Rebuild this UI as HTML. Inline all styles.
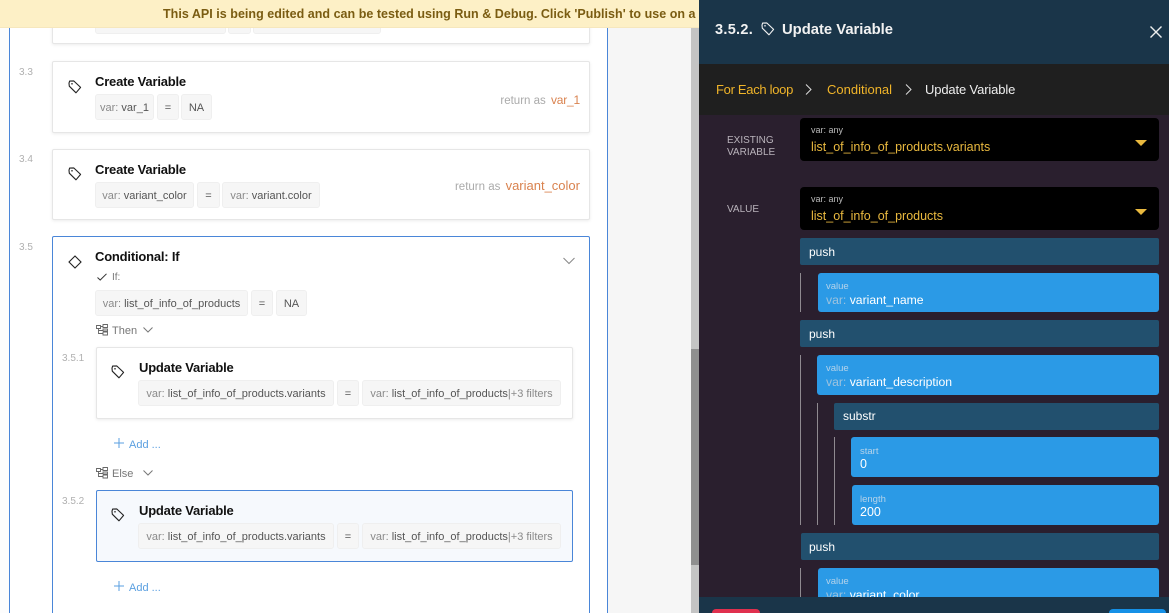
<!DOCTYPE html>
<html><head><meta charset="utf-8">
<style>
html,body{margin:0;padding:0;width:1169px;height:613px;overflow:hidden;background:#f6f6f6;font-family:"Liberation Sans",sans-serif}
#w{position:relative;width:1169px;height:613px;overflow:hidden;contain:paint}
.a,.t,.card,.p{position:absolute;box-sizing:border-box}
.t{white-space:nowrap;line-height:16px;height:16px}
.card{background:#fff;border:1px solid #e6e6e6;border-radius:2px;box-shadow:0 1px 3px rgba(0,0,0,.08)}
.blue{border:1px solid #4a86d8}
.p{background:#f6f6f6;border:1px solid #efefef;border-radius:3px;height:26px;line-height:26px;font-size:11px;color:#555;white-space:nowrap;text-align:center}
.p i{font-style:normal;color:#8a8a8a}
.n{font-size:10px;color:#b0b0b0}
.ti{font-size:13px;font-weight:bold;color:#111;letter-spacing:-.2px}
.ret{font-size:11.5px;color:#aaa;text-align:right}
.ret span{margin-right:2px}
.ret b{font-weight:normal;font-size:13px;color:#d9824e}
.g{font-size:11px;color:#777}
.add{font-size:11px;color:#5a9fe0}
.b1{background:#22506e;border-radius:2px}
.b2{background:#2b9ae6;border-radius:3px}
.sm{font-size:9.5px;color:#b5d3ea}
.v{font-size:12.2px;color:#fff}
.v i{font-style:normal;color:#9ec3de}
.pu{font-size:12px;color:#fff}
.ln{width:1px;background:#8f8a90}
svg{position:absolute;overflow:visible}
</style></head><body><div id="w">

<div class="a" style="left:0;top:0;width:9px;height:613px;background:#fdfdfd"></div>
<div class="a" style="left:9px;top:0;width:599px;height:613px;background:#fff;border-left:1px solid #4a86d8;border-right:1px solid #4a86d8"></div>
<div class="a" style="left:691px;top:0;width:8px;height:613px;background:#c4c4c4"></div>
<div class="a" style="left:691px;top:349px;width:8px;height:216px;background:#8f8f8f"></div>

<!-- 3.2 -->
<div class="card" style="left:52px;top:-20px;width:538px;height:64px"></div>
<div class="p" style="left:95px;top:8px;width:131px"></div>
<div class="p" style="left:228px;top:8px;width:23px"></div>
<div class="p" style="left:253px;top:8px;width:128px"></div>

<!-- 3.3 -->
<div class="t n" style="left:19px;top:65px">3.3</div>
<div class="card" style="left:52px;top:61px;width:538px;height:72px"></div>
<svg style="left:68px;top:80px" width="14" height="14" viewBox="0 0 14 14" fill="none" stroke="#222" stroke-width="1.1" stroke-linejoin="round"><path d="M1 3.2 1.6 1.1 5.7 .9 12.6 7.4 8 12.8 1.3 6.2Z"/><circle cx="4" cy="3.8" r=".8" fill="#222" stroke="none"/></svg>
<div class="t ti" style="left:95px;top:74px">Create Variable</div>
<div class="p" style="left:95px;top:94px;width:59px"><i>var:</i> var_1</div>
<div class="p" style="left:157px;top:94px;width:22px">=</div>
<div class="p" style="left:181px;top:94px;width:31px">NA</div>
<div class="t ret" style="right:589px;top:92px"><span>return as</span> <b style="font-size:12px;letter-spacing:-.2px">var_1</b></div>

<!-- 3.4 -->
<div class="t n" style="left:19px;top:152px">3.4</div>
<div class="card" style="left:52px;top:149px;width:538px;height:71px"></div>
<svg style="left:68px;top:167px" width="14" height="14" viewBox="0 0 14 14" fill="none" stroke="#222" stroke-width="1.1" stroke-linejoin="round"><path d="M1 3.2 1.6 1.1 5.7 .9 12.6 7.4 8 12.8 1.3 6.2Z"/><circle cx="4" cy="3.8" r=".8" fill="#222" stroke="none"/></svg>
<div class="t ti" style="left:95px;top:162px">Create Variable</div>
<div class="p" style="left:95px;top:182px;width:99px"><i>var:</i> variant_color</div>
<div class="p" style="left:197px;top:182px;width:23px">=</div>
<div class="p" style="left:222px;top:182px;width:98px"><i>var:</i> variant.color</div>
<div class="t ret" style="right:589px;top:178px"><span>return as</span> <b>variant_color</b></div>

<!-- 3.5 -->
<div class="t n" style="left:19px;top:240px">3.5</div>
<div class="card blue" style="left:52px;top:236px;width:538px;height:400px;box-shadow:none"></div>
<svg style="left:68px;top:255px" width="14" height="14" viewBox="0 0 14 14" fill="none" stroke="#222" stroke-width="1.1"><path d="M7 1 13 7 7 13 1 7Z"/></svg>
<div class="t ti" style="left:95px;top:249px">Conditional: If</div>
<svg style="left:563px;top:257px" width="12" height="8" viewBox="0 0 12 8" fill="none" stroke="#888" stroke-width="1"><path d="M.5 1 6 6.5 11.5 1"/></svg>
<svg style="left:97px;top:273px" width="10" height="8" viewBox="0 0 10 8" fill="none" stroke="#333" stroke-width="1"><path d="M.5 4.5 3.2 7 9.5 .8"/></svg>
<div class="t g" style="left:112px;top:270px;font-size:10px">If:</div>
<div class="p" style="left:95px;top:290px;width:153px"><i>var:</i> list_of_info_of_products</div>
<div class="p" style="left:251px;top:290px;width:22px">=</div>
<div class="p" style="left:276px;top:290px;width:31px">NA</div>

<svg style="left:96px;top:324px" width="12" height="12" viewBox="0 0 12 12" fill="none" stroke="#666" stroke-width=".9"><path d="M.5 1.5H4.5V4.5H.5ZM7 .5H11.5V3.5H7ZM7 8H11.5V11H7ZM2.5 4.5V9.5H7M4.5 2.5H7M2.5 6.5H7V5H11.5V7H7"/></svg>
<div class="t g" style="left:112px;top:323px">Then</div>
<svg style="left:143px;top:327px" width="10" height="6" viewBox="0 0 10 6" fill="none" stroke="#777" stroke-width="1"><path d="M.5 .5 5 5 9.5 .5"/></svg>

<!-- 3.5.1 -->
<div class="t n" style="left:62px;top:351px">3.5.1</div>
<div class="card" style="left:96px;top:347px;width:477px;height:72px"></div>
<svg style="left:111px;top:365px" width="14" height="14" viewBox="0 0 14 14" fill="none" stroke="#222" stroke-width="1.1" stroke-linejoin="round"><path d="M1 3.2 1.6 1.1 5.7 .9 12.6 7.4 8 12.8 1.3 6.2Z"/><circle cx="4" cy="3.8" r=".8" fill="#222" stroke="none"/></svg>
<div class="t ti" style="left:139px;top:360px">Update Variable</div>
<div class="p" style="left:138px;top:380px;width:196px"><i>var:</i> list_of_info_of_products.variants</div>
<div class="p" style="left:337px;top:380px;width:22px">=</div>
<div class="p" style="left:362px;top:380px;width:199px"><i>var:</i> list_of_info_of_products<i>|+3 filters</i></div>

<svg style="left:114px;top:438px" width="10" height="10" viewBox="0 0 10 10" stroke="#5a9fe0" stroke-width="1"><path d="M5 0V10M0 5H10"/></svg>
<div class="t add" style="left:129px;top:437px">Add ...</div>

<svg style="left:96px;top:467px" width="12" height="12" viewBox="0 0 12 12" fill="none" stroke="#666" stroke-width=".9"><path d="M.5 1.5H4.5V4.5H.5ZM7 .5H11.5V3.5H7ZM7 8H11.5V11H7ZM2.5 4.5V9.5H7M4.5 2.5H7M2.5 6.5H7V5H11.5V7H7"/></svg>
<div class="t g" style="left:112px;top:466px">Else</div>
<svg style="left:143px;top:470px" width="10" height="6" viewBox="0 0 10 6" fill="none" stroke="#777" stroke-width="1"><path d="M.5 .5 5 5 9.5 .5"/></svg>

<!-- 3.5.2 -->
<div class="t n" style="left:62px;top:494px">3.5.2</div>
<div class="card blue" style="left:96px;top:490px;width:477px;height:72px;background:#f6f9fd;box-shadow:none"></div>
<svg style="left:111px;top:508px" width="14" height="14" viewBox="0 0 14 14" fill="none" stroke="#222" stroke-width="1.1" stroke-linejoin="round"><path d="M1 3.2 1.6 1.1 5.7 .9 12.6 7.4 8 12.8 1.3 6.2Z"/><circle cx="4" cy="3.8" r=".8" fill="#222" stroke="none"/></svg>
<div class="t ti" style="left:139px;top:503px">Update Variable</div>
<div class="p" style="left:138px;top:523px;width:196px"><i>var:</i> list_of_info_of_products.variants</div>
<div class="p" style="left:337px;top:523px;width:22px">=</div>
<div class="p" style="left:362px;top:523px;width:199px"><i>var:</i> list_of_info_of_products<i>|+3 filters</i></div>

<svg style="left:114px;top:581px" width="10" height="10" viewBox="0 0 10 10" stroke="#5a9fe0" stroke-width="1"><path d="M5 0V10M0 5H10"/></svg>
<div class="t add" style="left:129px;top:580px">Add ...</div>

<!-- Banner -->
<div class="a" style="left:0;top:0;width:699px;height:28px;background:#fdf0c6;border-bottom:1px solid #f6e7bd"></div>
<div class="t" style="left:163px;top:6px;font-size:12.5px;font-weight:bold;color:#7a5c12;letter-spacing:.03px">This API is being edited and can be tested using Run &amp; Debug. Click 'Publish' to use on a</div>

<!-- Right panel -->
<div class="a" style="left:699px;top:0;width:470px;height:613px;background:#2a1f2e"></div>
<div class="a" style="left:699px;top:0;width:470px;height:64px;background:#1a3549"></div>
<div class="a" style="left:699px;top:64px;width:470px;height:51px;background:#1f1f1f"></div>

<div class="t" style="left:715px;top:22px;font-size:14.5px;font-weight:bold;color:#f2f2f2;letter-spacing:.3px">3.5.2.</div>
<svg style="left:761px;top:22px" width="14" height="14" viewBox="0 0 14 14" fill="none" stroke="#f2f2f2" stroke-width="1.1" stroke-linejoin="round"><path d="M1 3.2 1.6 1.1 5.7 .9 12.6 7.4 8 12.8 1.3 6.2Z"/><circle cx="4" cy="3.8" r=".8" fill="#f2f2f2" stroke="none"/></svg>
<div class="t" style="left:782px;top:22px;font-size:14.8px;font-weight:bold;color:#f2f2f2">Update Variable</div>
<svg style="left:1150px;top:26px" width="12" height="12" viewBox="0 0 12 12" stroke="#eee" stroke-width="1.4"><path d="M.5 .5 11.5 11.5M11.5 .5 .5 11.5"/></svg>

<div class="t" style="left:716px;top:82px;font-size:13px;color:#f0b429;letter-spacing:-.3px">For Each loop</div>
<svg style="left:805px;top:84px" width="7" height="11" viewBox="0 0 7 11" fill="none" stroke="#ddd" stroke-width="1"><path d="M1 .5 6 5.5 1 10.5"/></svg>
<div class="t" style="left:827px;top:82px;font-size:13px;color:#f0b429">Conditional</div>
<svg style="left:905px;top:84px" width="7" height="11" viewBox="0 0 7 11" fill="none" stroke="#ddd" stroke-width="1"><path d="M1 .5 6 5.5 1 10.5"/></svg>
<div class="t" style="left:925px;top:82px;font-size:13px;color:#eee;letter-spacing:-.14px">Update Variable</div>

<div class="t" style="left:727px;top:135px;font-size:10px;line-height:12px;height:24px;color:#b9b3bb">EXISTING<br>VARIABLE</div>
<div class="t" style="left:727px;top:202px;font-size:10px;color:#b9b3bb">VALUE</div>

<div class="a" style="left:800px;top:118px;width:359px;height:43px;background:#000;border-radius:4px"></div>
<div class="t" style="left:811px;top:122px;font-size:9px;color:#bbb">var: any</div>
<div class="t" style="left:811px;top:139px;font-size:12.5px;color:#e9b93f">list_of_info_of_products.variants</div>
<svg style="left:1135px;top:140px" width="12" height="6"><path d="M0 0H12L6 6Z" fill="#e9b93f"/></svg>

<div class="a" style="left:800px;top:187px;width:359px;height:43px;background:#000;border-radius:4px"></div>
<div class="t" style="left:811px;top:191px;font-size:9px;color:#bbb">var: any</div>
<div class="t" style="left:811px;top:208px;font-size:12.5px;color:#e9b93f">list_of_info_of_products</div>
<svg style="left:1135px;top:209px" width="12" height="6"><path d="M0 0H12L6 6Z" fill="#e9b93f"/></svg>

<div class="a b1" style="left:800px;top:238px;width:359px;height:27px"></div>
<div class="t pu" style="left:809px;top:244px">push</div>
<div class="a ln" style="left:800px;top:273px;height:39px"></div>
<div class="a b2" style="left:818px;top:273px;width:341px;height:39px"></div>
<div class="t sm" style="left:826px;top:279px">value</div>
<div class="t v" style="left:826px;top:292px"><i>var:</i> variant_name</div>

<div class="a b1" style="left:800px;top:320px;width:359px;height:27px"></div>
<div class="t pu" style="left:809px;top:326px">push</div>
<div class="a ln" style="left:800px;top:355px;height:170px"></div>
<div class="a b2" style="left:817px;top:355px;width:342px;height:40px"></div>
<div class="t sm" style="left:826px;top:361px">value</div>
<div class="t v" style="left:826px;top:374px"><i>var:</i> variant_description</div>

<div class="a ln" style="left:817px;top:403px;height:122px"></div>
<div class="a b1" style="left:834px;top:403px;width:325px;height:27px"></div>
<div class="t pu" style="left:843px;top:408px">substr</div>
<div class="a ln" style="left:834px;top:437px;height:88px"></div>
<div class="a b2" style="left:851px;top:437px;width:308px;height:40px"></div>
<div class="t sm" style="left:860px;top:444px">start</div>
<div class="t v" style="left:860px;top:456px;font-size:12.5px">0</div>
<div class="a b2" style="left:852px;top:485px;width:307px;height:40px"></div>
<div class="t sm" style="left:860px;top:492px">length</div>
<div class="t v" style="left:860px;top:504px;font-size:12.5px">200</div>

<div class="a b1" style="left:801px;top:533px;width:358px;height:27px"></div>
<div class="t pu" style="left:809px;top:539px">push</div>
<div class="a ln" style="left:800px;top:568px;height:29px"></div>
<div class="a b2" style="left:818px;top:568px;width:341px;height:35px"></div>
<div class="t sm" style="left:826px;top:574px">value</div>
<div class="t v" style="left:826px;top:587px"><i>var:</i> variant_color</div>

<div class="a" style="left:699px;top:597px;width:470px;height:16px;background:#1a3549"></div>
<div class="a" style="left:712px;top:609px;width:48px;height:10px;background:#e0304e;border-radius:4px"></div>
<div class="a" style="left:1109px;top:609px;width:57px;height:10px;background:#1590e6;border-radius:4px"></div>

</div></body></html>
